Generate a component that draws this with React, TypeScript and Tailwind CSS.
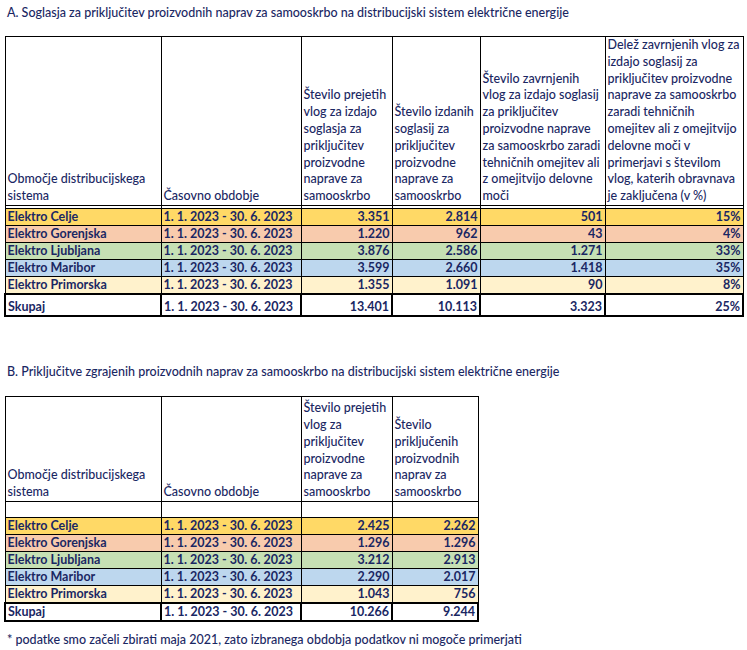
import React from "react";

const font = { fontFamily: "Lato, 'Open Sans', sans-serif" };

const rowsA = [
  { name: "Elektro Celje", bg: "bg-[#ffd966]", v: ["3.351", "2.814", "501", "15%"] },
  { name: "Elektro Gorenjska", bg: "bg-[#f8cbad]", v: ["1.220", "962", "43", "4%"] },
  { name: "Elektro Ljubljana", bg: "bg-[#c6e0b4]", v: ["3.876", "2.586", "1.271", "33%"] },
  { name: "Elektro Maribor", bg: "bg-[#bdd7ee]", v: ["3.599", "2.660", "1.418", "35%"] },
  { name: "Elektro Primorska", bg: "bg-[#fff2cc]", v: ["1.355", "1.091", "90", "8%"] },
];

const rowsB = [
  { name: "Elektro Celje", bg: "bg-[#ffd966]", v: ["2.425", "2.262"] },
  { name: "Elektro Gorenjska", bg: "bg-[#f8cbad]", v: ["1.296", "1.296"] },
  { name: "Elektro Ljubljana", bg: "bg-[#c6e0b4]", v: ["3.212", "2.913"] },
  { name: "Elektro Maribor", bg: "bg-[#bdd7ee]", v: ["2.290", "2.017"] },
  { name: "Elektro Primorska", bg: "bg-[#fff2cc]", v: ["1.043", "756"] },
];

const period = "1. 1. 2023 - 30. 6. 2023";

function Lines({ lines }: { lines: string[] }) {
  return (
    <div className="whitespace-nowrap">
      {lines.map((l, i) => (
        <div key={i}>{l}</div>
      ))}
    </div>
  );
}

const headA: string[][] = [
  ["Območje distribucijskega", "sistema"],
  ["Časovno obdobje"],
  ["Število prejetih", "vlog za izdajo", "soglasja za", "priključitev", "proizvodne", "naprave za", "samooskrbo"],
  ["Število izdanih", "soglasij za", "priključitev", "proizvodne", "naprave za", "samooskrbo"],
  ["Število zavrnjenih", "vlog za izdajo soglasij", "za priključitev", "proizvodne naprave", "za samooskrbo zaradi", "tehničnih omejitev ali", "z omejitvijo delovne", "moči"],
  ["Delež zavrnjenih vlog za", "izdajo soglasij za", "priključitev proizvodne", "naprave za samooskrbo", "zaradi tehničnih", "omejitev ali z omejitvijo", "delovne moči v", "primerjavi s številom", "vlog, katerih obravnava", "je zaključena (v %)"],
];

const headB: string[][] = [
  ["Območje distribucijskega", "sistema"],
  ["Časovno obdobje"],
  ["Število prejetih", "vlog za", "priključitev", "proizvodne", "naprave za", "samooskrbo"],
  ["Število", "priključenih", "proizvodnih", "naprav za", "samooskrbo"],
];

export default function App() {
  return (
    <div className="bg-white w-[747px] h-[650px] pl-[4px] text-[#1a2763] text-[12.5px] leading-[17px]" style={font}>
      <div className="pl-[3px] pt-[4px] h-[21px] font-medium">
        A. Soglasja za priključitev proizvodnih naprav za samooskrbo na distribucijski sistem električne energije
      </div>
      <table className="mt-[15px] border-collapse table-fixed w-[738px] border border-black">
        <colgroup>
          <col className="w-[156px]" />
          <col className="w-[140px]" />
          <col className="w-[91px]" />
          <col className="w-[88px]" />
          <col className="w-[125px]" />
          <col className="w-[138px]" />
        </colgroup>
        <tbody>
          <tr className="h-[168px] font-medium">
            {headA.map((h, i) => (
              <td key={i} className="border border-black align-bottom px-[2px] p-0 leading-[16.8px]">
                <Lines lines={h} />
              </td>
            ))}
          </tr>
          <tr className="h-[3px]">
            {headA.map((_, i) => (
              <td key={i} className="border border-black p-0 h-[3px] leading-[0px]"></td>
            ))}
          </tr>
          {rowsA.map((r) => (
            <tr key={r.name} className={`h-[16px] leading-[16px] font-bold ${r.bg}`}>
              <td className="border border-black px-[2px] py-0 whitespace-nowrap">{r.name}</td>
              <td className="border border-black px-[2px] py-0 whitespace-nowrap">{period}</td>
              {r.v.map((v, i) => (
                <td key={i} className="border border-black px-[2px] py-0 text-right">{v}</td>
              ))}
            </tr>
          ))}
          <tr className="h-[22px] leading-[16px] font-bold">
            <td className="border-2 border-black px-[2px] py-0 align-bottom">Skupaj</td>
            <td className="border-2 border-black px-[2px] py-0 align-bottom whitespace-nowrap">{period}</td>
            {["13.401", "10.113", "3.323", "25%"].map((v, i) => (
              <td key={i} className="border-2 border-black px-[2px] py-0 text-right align-bottom">{v}</td>
            ))}
          </tr>
        </tbody>
      </table>

      <div className="pl-[3px] mt-[46px] h-[17px] font-medium">
        B. Priključitve zgrajenih proizvodnih naprav za samooskrbo na distribucijski sistem električne energije
      </div>
      <table className="mt-[16px] border-collapse table-fixed w-[473px] border border-black">
        <colgroup>
          <col className="w-[156px]" />
          <col className="w-[140px]" />
          <col className="w-[91px]" />
          <col className="w-[86px]" />
        </colgroup>
        <tbody>
          <tr className="h-[105px] font-medium">
            {headB.map((h, i) => (
              <td key={i} className="border border-black align-bottom px-[2px] p-0 leading-[16.8px]">
                <Lines lines={h} />
              </td>
            ))}
          </tr>
          <tr className="h-[16px] leading-[16px]">
            {headB.map((_, i) => (
              <td key={i} className="border border-black p-0"></td>
            ))}
          </tr>
          {rowsB.map((r) => (
            <tr key={r.name} className={`h-[16px] leading-[16px] font-bold ${r.bg}`}>
              <td className="border border-black px-[2px] py-0 whitespace-nowrap">{r.name}</td>
              <td className="border border-black px-[2px] py-0 whitespace-nowrap">{period}</td>
              {r.v.map((v, i) => (
                <td key={i} className="border border-black px-[2px] py-0 text-right">{v}</td>
              ))}
            </tr>
          ))}
          <tr className="h-[16px] leading-[16px] font-bold">
            <td className="border-2 border-black px-[2px] py-0">Skupaj</td>
            <td className="border-2 border-black px-[2px] py-0 whitespace-nowrap">{period}</td>
            {["10.266", "9.244"].map((v, i) => (
              <td key={i} className="border-2 border-black px-[2px] py-0 text-right">{v}</td>
            ))}
          </tr>
        </tbody>
      </table>
      <div className="pl-[3px] mt-[9px] font-medium">
        * podatke smo začeli zbirati maja 2021, zato izbranega obdobja podatkov ni mogoče primerjati
      </div>
    </div>
  );
}
